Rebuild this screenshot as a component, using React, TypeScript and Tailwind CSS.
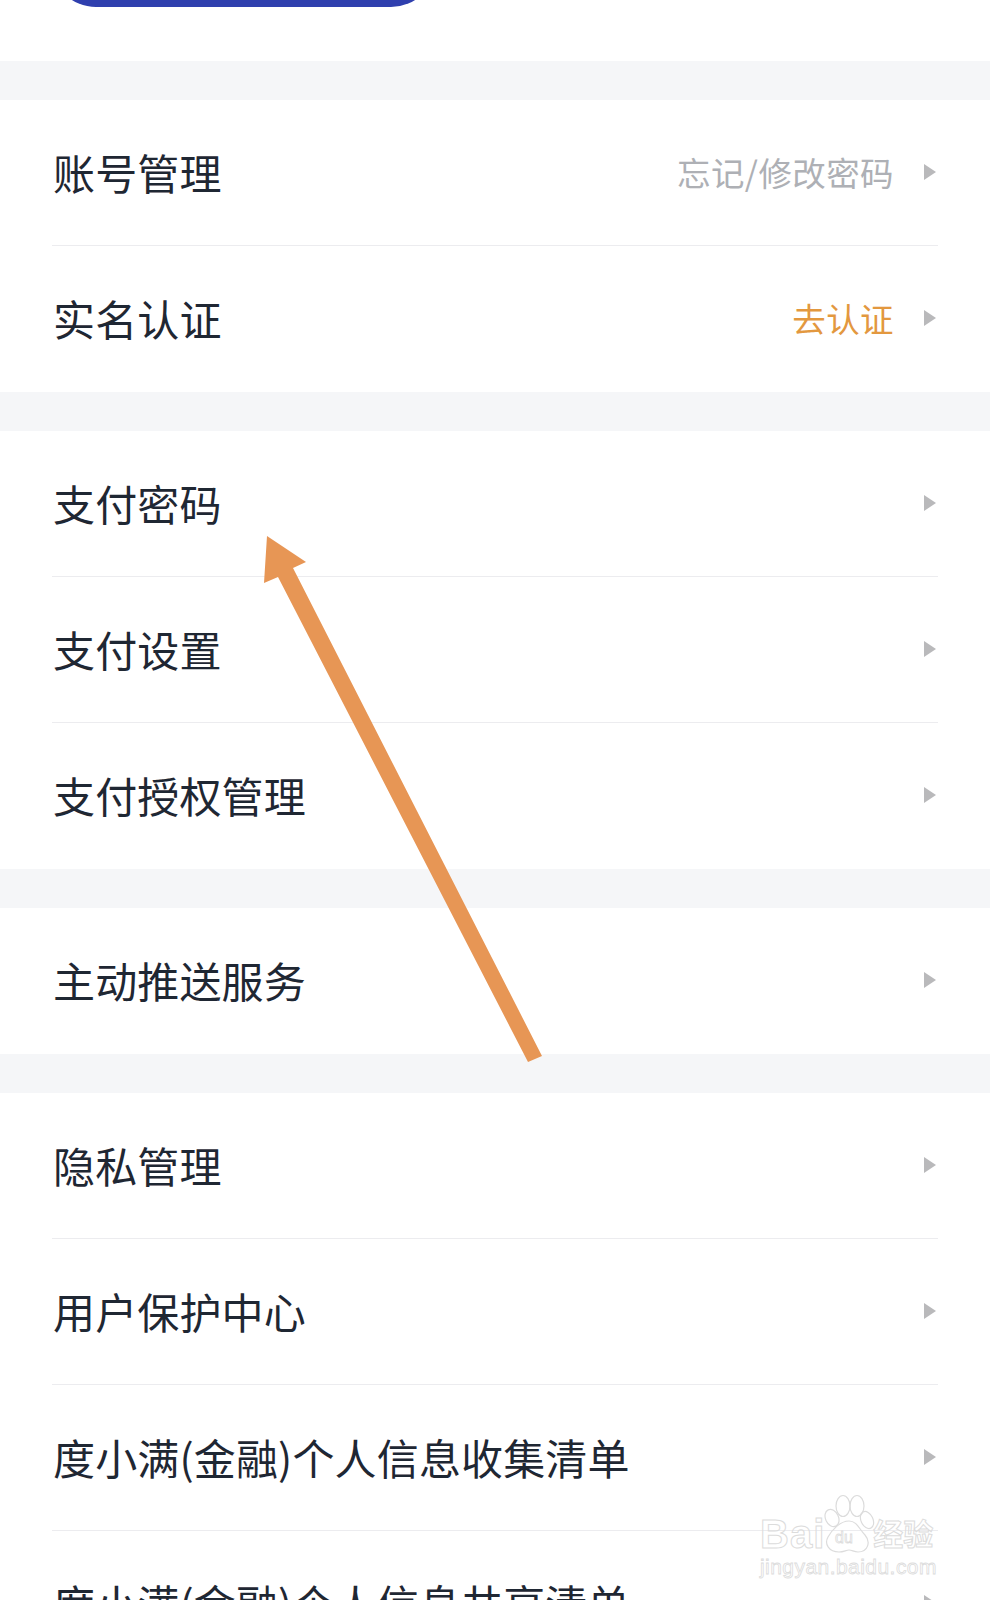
const groups = [
  [
    { label: "账号管理", hint: "忘记/修改密码", hintClass: "text-[#aeb0b5]" },
    { label: "实名认证", hint: "去认证", hintClass: "text-[#e3983f]" },
  ],
  [{ label: "支付密码" }, { label: "支付设置" }, { label: "支付授权管理" }],
  [{ label: "主动推送服务" }],
  [
    { label: "隐私管理" },
    { label: "用户保护中心" },
    { label: "度小满(金融)个人信息收集清单" },
    { label: "度小满(金融)个人信息共享清单" },
  ],
];

type Item = { label: string; hint?: string; hintClass?: string };

function Row({ item, last }: { item: Item; last: boolean }) {
  return (
    <div className="px-[52px]">
      <div
        className={
          "flex h-[146px] items-center justify-between pl-[1px] pr-[2px] " +
          (last ? "" : "border-b border-[#ececef]")
        }
      >
        <span className="mb-[2px] text-[42px] leading-none tracking-[0.15px] text-[#1f2733]">{item.label}</span>
        <div className="flex items-center">
          {item.hint && (
            <span className={"mb-[2px] text-[33.5px] leading-none tracking-[0.4px] " + item.hintClass}>{item.hint}</span>
          )}
          <svg width="12" height="16" viewBox="0 0 12 16" className="ml-[30px] -mt-[2px]">
            <polygon points="0,0 12,8 0,16" fill="#b9b9bb" />
          </svg>
        </div>
      </div>
    </div>
  );
}

function Watermark() {
  return (
    <div className="absolute left-[760px] top-[1494px] w-[180px] text-transparent">
      <div className="flex items-end">
        <span className="font-['Liberation_Sans',sans-serif] text-[40px] font-bold leading-none tracking-[1px] [-webkit-text-stroke:1px_#dcdcdc]">
          Bai
        </span>
        <svg width="52" height="60" viewBox="0 0 52 60" fill="none" stroke="#dcdcdc" strokeWidth="1.2" className="-ml-[2px]">
          <ellipse cx="9" cy="24" rx="6.5" ry="9" transform="rotate(-25 9 24)" />
          <ellipse cx="20" cy="12" rx="7" ry="10.5" />
          <ellipse cx="34" cy="12" rx="7" ry="10.5" />
          <ellipse cx="44" cy="26" rx="6" ry="9" transform="rotate(-25 44 26)" />
          <path d="M26 27c8 0 10 8 16 14 6 7 3 17-7 17-4 0-6-2-9-2s-5 2-10 2C6 58 1 50 5 43c4-7 12-16 21-16z" />
          <text x="12" y="49" fontSize="16" fontFamily="Liberation Sans, sans-serif" fill="none" stroke="#dcdcdc" strokeWidth="0.8">
            du
          </text>
        </svg>
        <span className="mb-[4px] -ml-[2px] font-['Noto_Sans_CJK_SC',sans-serif] text-[30px] font-bold leading-[36px] [-webkit-text-stroke:1px_#dcdcdc]">
          经验
        </span>
      </div>
      <div className="mt-[1px] font-['Liberation_Sans',sans-serif] text-[21px] leading-[24px] tracking-[0.45px] [-webkit-text-stroke:0.8px_#dcdcdc]">
        jingyan.baidu.com
      </div>
    </div>
  );
}

export default function App() {
  return (
    <div className="relative h-[1600px] w-[990px] overflow-hidden bg-white font-['Noto_Sans_CJK_SC',sans-serif]">
      <div className="h-[61px] overflow-hidden">
        <div className="-mt-[83px] ml-[51px] h-[90px] w-[385px] rounded-full bg-[#2f3fae]" />
      </div>
      {groups.map((group, i) => (
        <div key={i}>
          <div className="h-[39px] bg-[#f5f6f8]" />
          {group.map((item, j) => (
            <Row key={item.label} item={item} last={j === group.length - 1} />
          ))}
        </div>
      ))}
      <svg className="absolute inset-0" width="990" height="1600" fill="none">
        <polygon points="267,536 306,562 293,568 542,1056 528,1062 278,577 264,583" fill="#e79655" />
      </svg>
      <Watermark />
    </div>
  );
}
